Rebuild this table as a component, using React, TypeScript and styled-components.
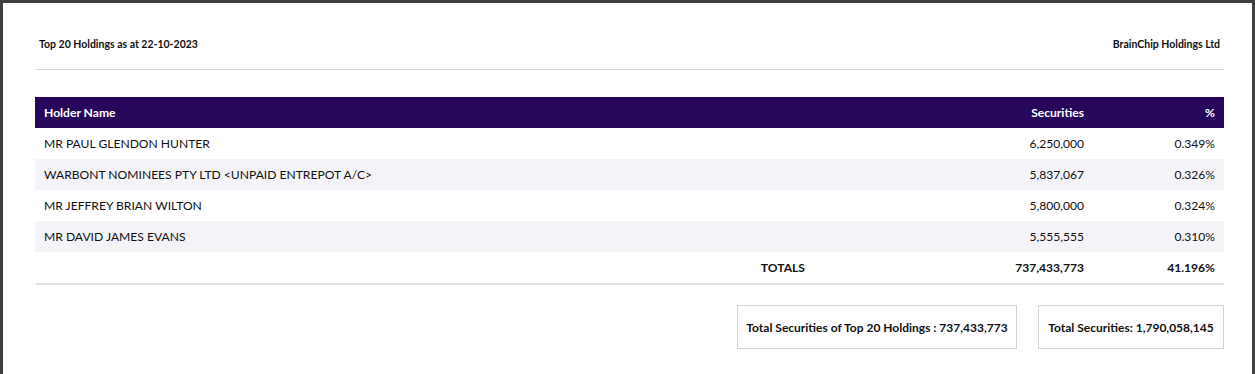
import React from "react";
import styled, { createGlobalStyle } from "styled-components";

const GlobalStyle = createGlobalStyle`
  html, body {
    margin: 0;
    padding: 0;
    background: #3f3f3f;
  }
  body {
    font-family: Lato, "Open Sans", "Liberation Sans", sans-serif;
    color: #111;
  }
`;

const Page = styled.div`
  margin: 3px 3px 0 3px;
  min-height: 371px;
  background: #ffffff;
  padding: 0 28px 0 32px;
  box-sizing: border-box;
  display: flex;
  flex-direction: column;
`;

const TitleBar = styled.div`
  display: flex;
  justify-content: space-between;
  align-items: center;
  padding: 35px 4px 0 4px;
  height: 12px;
  font-size: 10.5px;
  font-weight: 700;
  line-height: 12px;
`;

const Divider = styled.hr`
  margin: 19px 0 0 1px;
  border: 0;
  border-top: 1px solid #d6d6d6;
  height: 0;
`;

const Table = styled.div`
  margin-top: 27px;
  display: flex;
  flex-direction: column;
`;

const Row = styled.div<{ $variant?: "head" | "even" | "odd" | "total" }>`
  display: grid;
  grid-template-columns: 1fr 200px 131px;
  align-items: center;
  height: 31px;
  font-size: 12.1px;
  background: ${(p) =>
    p.$variant === "head" ? "#26075a" : p.$variant === "even" ? "#f4f4f8" : "#ffffff"};
  color: ${(p) => (p.$variant === "head" ? "#ffffff" : "#111")};
  font-weight: ${(p) => (p.$variant === "head" || p.$variant === "total" ? 700 : 400)};
  border-bottom: ${(p) => (p.$variant === "total" ? "2px solid #e2e2e2" : "none")};
  margin-left: ${(p) => (p.$variant === "total" ? "1px" : "0")};
`;

const Cell = styled.div<{ $align?: "left" | "right" }>`
  padding: 0 9px;
  text-align: ${(p) => p.$align ?? "left"};
  white-space: nowrap;
`;

const TotalLabel = styled(Cell)`
  text-align: right;
  padding-right: 88px;
`;

const Summary = styled.div`
  display: flex;
  justify-content: flex-end;
  gap: 21px;
  margin-top: 20px;
`;

const SummaryBox = styled.div<{ $width: number }>`
  width: ${(p) => p.$width}px;
  height: 44px;
  box-sizing: border-box;
  border: 1px solid #d3d3d3;
  display: flex;
  align-items: center;
  justify-content: center;
  font-size: 12px;
  font-weight: 700;
  white-space: nowrap;
`;

const holders = [
  { name: "MR PAUL GLENDON HUNTER", securities: "6,250,000", pct: "0.349%" },
  { name: "WARBONT NOMINEES PTY LTD <UNPAID ENTREPOT A/C>", securities: "5,837,067", pct: "0.326%" },
  { name: "MR JEFFREY BRIAN WILTON", securities: "5,800,000", pct: "0.324%" },
  { name: "MR DAVID JAMES EVANS", securities: "5,555,555", pct: "0.310%" },
];

export default function App() {
  return (
    <>
      <GlobalStyle />
      <Page>
        <TitleBar>
          <span>Top 20 Holdings as at 22-10-2023</span>
          <span>BrainChip Holdings Ltd</span>
        </TitleBar>
        <Divider />
        <Table>
          <Row $variant="head">
            <Cell>Holder Name</Cell>
            <Cell $align="right">Securities</Cell>
            <Cell $align="right">%</Cell>
          </Row>
          {holders.map((h, i) => (
            <Row key={h.name} $variant={i % 2 === 1 ? "even" : "odd"}>
              <Cell>{h.name}</Cell>
              <Cell $align="right">{h.securities}</Cell>
              <Cell $align="right">{h.pct}</Cell>
            </Row>
          ))}
          <Row $variant="total">
            <TotalLabel>TOTALS</TotalLabel>
            <Cell $align="right">737,433,773</Cell>
            <Cell $align="right">41.196%</Cell>
          </Row>
        </Table>
        <Summary>
          <SummaryBox $width={280}>Total Securities of Top 20 Holdings : 737,433,773</SummaryBox>
          <SummaryBox $width={186}>Total Securities: 1,790,058,145</SummaryBox>
        </Summary>
      </Page>
    </>
  );
}
